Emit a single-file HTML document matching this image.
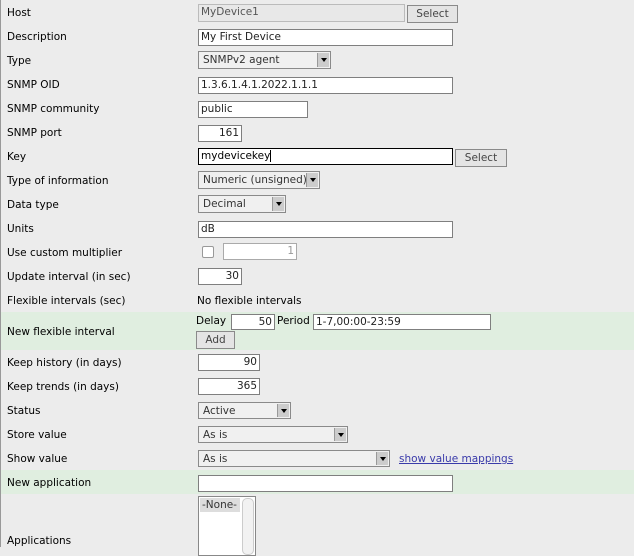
<!DOCTYPE html><html><head><style>
*{box-sizing:border-box;margin:0;padding:0}
body{width:634px;height:547px;background:#ececec;font-family:"DejaVu Sans","Liberation Sans",sans-serif;font-size:10.5px;color:#000;position:relative;overflow:hidden;border-left:1px solid #999}
.l{position:absolute;left:6px;line-height:14px;margin-top:1px}
.t{position:absolute;line-height:14px;margin-top:1px}
.i{position:absolute;background:#fff;border:1px solid #7f7f7f;font-size:10.5px;line-height:15px;padding:0 2px;color:#222;white-space:nowrap;overflow:hidden}
.r{text-align:right}
.b{position:absolute;background:#e4e4e4;border:1px solid #8a8a8a;color:#444;text-align:center;line-height:16px}
.s{position:absolute;background:#f0f0f0;border:1px solid #8a8a8a;color:#333;padding:0 4px;line-height:16px;white-space:nowrap;overflow:hidden}
.s:after{content:"";position:absolute;right:1px;top:1px;bottom:1px;width:11px;background:#ccc;border-left:1px solid #999}
.s:before{content:"";position:absolute;right:3px;top:6px;border:3px solid transparent;border-top:4px solid #000;z-index:2}
.g{position:absolute;left:0;width:634px;background:#e0eee0}
</style></head><body>
<div class="g" style="top:312px;height:38px"></div>
<div class="g" style="top:470px;height:24px"></div>
<div class="l" style="top:5px">Host</div>
<div class="i" style="left:197px;top:4px;width:207px;height:18px;background:#e8e8e8;border-color:#bbb;color:#555">MyDevice1</div>
<div class="b" style="left:406px;top:5px;width:51px;height:18px">Select</div>
<div class="l" style="top:29px">Description</div>
<div class="i" style="left:197px;top:29px;width:255px;height:17px">My First Device</div>
<div class="l" style="top:53px">Type</div>
<div class="s" style="left:197px;top:51px;width:133px;height:18px">SNMPv2 agent</div>
<div class="l" style="top:77px">SNMP OID</div>
<div class="i" style="left:197px;top:77px;width:255px;height:17px">1.3.6.1.4.1.2022.1.1.1</div>
<div class="l" style="top:101px">SNMP community</div>
<div class="i" style="left:197px;top:101px;width:110px;height:17px">public</div>
<div class="l" style="top:125px">SNMP port</div>
<div class="i r" style="left:197px;top:125px;width:44px;height:17px">161</div>
<div class="l" style="top:149px">Key</div>
<div class="i" style="left:197px;top:148px;width:255px;height:17px;border-color:#000;color:#000">mydevicekey<span style="border-left:1px solid #000"></span></div>
<div class="b" style="left:454px;top:149px;width:52px;height:18px">Select</div>
<div class="l" style="top:173px">Type of information</div>
<div class="s" style="left:197px;top:171px;width:122px;height:18px">Numeric (unsigned)</div>
<div class="l" style="top:197px">Data type</div>
<div class="s" style="left:197px;top:195px;width:88px;height:18px">Decimal</div>
<div class="l" style="top:221px">Units</div>
<div class="i" style="left:197px;top:221px;width:255px;height:17px">dB</div>
<div class="l" style="top:245px">Use custom multiplier</div>
<div style="position:absolute;left:201px;top:246px;width:12px;height:12px;border:1px solid #999;background:#fff;border-radius:2px"></div>
<div class="i r" style="left:222px;top:243px;width:74px;height:17px;border-color:#aaa;color:#999">1</div>
<div class="l" style="top:269px">Update interval (in sec)</div>
<div class="i r" style="left:197px;top:268px;width:44px;height:17px">30</div>
<div class="l" style="top:293px">Flexible intervals (sec)</div>
<div class="t" style="left:196px;top:293px">No flexible intervals</div>
<div class="l" style="top:324px">New flexible interval</div>
<div class="t" style="left:195px;top:313px">Delay</div>
<div class="i r" style="left:230px;top:314px;width:44px;height:16px">50</div>
<div class="t" style="left:276px;top:313px">Period</div>
<div class="i" style="left:312px;top:314px;width:178px;height:16px">1-7,00:00-23:59</div>
<div class="b" style="left:195px;top:331px;width:39px;height:18px">Add</div>
<div class="l" style="top:355px">Keep history (in days)</div>
<div class="i r" style="left:197px;top:354px;width:62px;height:17px">90</div>
<div class="l" style="top:379px">Keep trends (in days)</div>
<div class="i r" style="left:197px;top:378px;width:62px;height:17px">365</div>
<div class="l" style="top:403px">Status</div>
<div class="s" style="left:197px;top:402px;width:93px;height:17px">Active</div>
<div class="l" style="top:427px">Store value</div>
<div class="s" style="left:197px;top:426px;width:150px;height:17px">As is</div>
<div class="l" style="top:451px">Show value</div>
<div class="s" style="left:197px;top:450px;width:192px;height:17px">As is</div>
<div class="t" style="left:398px;top:451px;color:#3a3aaa;text-decoration:underline">show value mappings</div>
<div class="l" style="top:475px">New application</div>
<div class="i" style="left:197px;top:475px;width:255px;height:17px"></div>
<div style="position:absolute;left:197px;top:496px;width:58px;height:60px;background:#fff;border:1px solid #888">
<div style="position:absolute;left:1px;top:1px;width:40px;height:14px;background:#ddd;color:#333;line-height:14px;padding-left:2px">-None-</div>
<div style="position:absolute;right:1px;top:1px;width:12px;bottom:0;background:#f2f2f2;border:1px solid #ccc;border-radius:5px"></div></div>
<div class="l" style="top:533px">Applications</div>
</body></html>
